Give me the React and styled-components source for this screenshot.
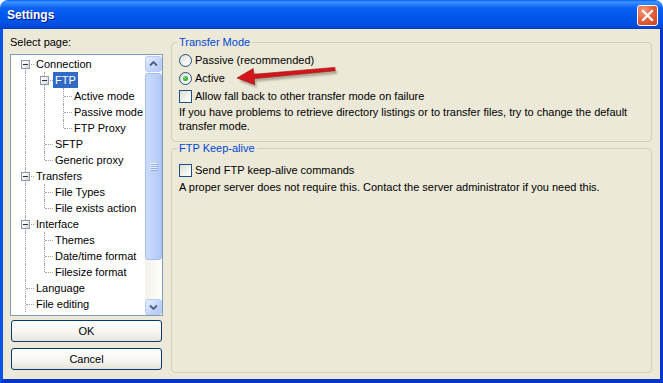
import React from "react";
import styled, { createGlobalStyle } from "styled-components";

const GlobalStyle = createGlobalStyle`
	html, body {
		margin: 0;
		padding: 0;
		background: #FFFFFF;
	}

	body {
		font-family: "Liberation Sans", Arial, sans-serif;
		font-size: 11px;
	}
`;

const Window = styled.div`
	position: relative;
	width: 663px;
	height: 383px;

	display: flex;
	flex-direction: column;

	border-radius: 8px 8px 0 0;
	overflow: hidden;

	font-family: "Liberation Sans", Arial, sans-serif;
	font-size: 11px;
	color: #000000;
`;

const TitleBar = styled.div`
	flex: none;
	height: 29px;
	padding: 0 5px 0 7px;

	display: flex;
	align-items: flex-start;
	justify-content: space-between;

	background: linear-gradient(180deg,
		#0A5FF7 0px, #3D95FF 2px, #2A83FD 4px, #0A60F2 8px,
		#0057EC 16px, #0053E6 23px, #0047D6 27px, #003BC2 29px);
`;

const Title = styled.div`
	margin-top: 8px;

	font-size: 12px;
	font-weight: bold;
	line-height: 14px;
	color: #FFFFFF;
	text-shadow: 1px 1px 0 #0A1883;
`;

const CloseButton = styled.div`
	margin-top: 5px;
	width: 21px;
	height: 21px;
	box-sizing: border-box;

	display: flex;
	align-items: center;
	justify-content: center;

	border: 1px solid #FFFFFF;
	border-radius: 3px;
	background: radial-gradient(circle at 30% 25%, #F39A7E 0%, #E4653F 45%, #CC3F19 100%);
`;

const Body = styled.div`
	flex: 1;
	min-height: 0;
	padding: 7px 8px 6px 7px;

	display: flex;
	gap: 8px;

	background: #ECE9D8;
	border-style: solid;
	border-width: 0 3px 4px 3px;
	border-color: #0B4FE0 #0436C9 #0436C9 #0A55E5;
`;

const LeftColumn = styled.div`
	flex: none;
	width: 153px;

	display: flex;
	flex-direction: column;
`;

const PageLabel = styled.div`
	margin-bottom: 5px;
	line-height: 13px;
`;

const TreeBox = styled.div`
	flex: none;
	height: 262px;
	box-sizing: border-box;
	margin-bottom: 4px;

	display: flex;

	border: 1px solid #7F9DB9;
	background: #FFFFFF;
`;

const TreeList = styled.div`
	flex: 1;
	min-width: 0;
	padding: 1px 0 0 5px;
	overflow: hidden;
`;

const TreeRow = styled.div`
	height: 16px;
	display: flex;
`;

const Guide = styled.span`
	position: relative;
	flex: none;
	width: 19px;

	&::before {
		content: '';
		display: ${(p) => (p.$up || p.$down ? "block" : "none")};
		position: absolute;
		left: 9px;
		top: ${(p) => (p.$up ? "0" : "8px")};
		bottom: ${(p) => (p.$down ? "0" : "8px")};
		border-left: 1px dotted #A0A0A0;
	}

	&::after {
		content: '';
		display: ${(p) => (p.$branch ? "block" : "none")};
		position: absolute;
		left: 10px;
		right: 1px;
		top: 8px;
		border-top: 1px dotted #A0A0A0;
	}
`;

const Expander = styled.span`
	position: absolute;
	left: 5px;
	top: 4px;
	z-index: 1;
	width: 9px;
	height: 9px;
	box-sizing: border-box;

	border: 1px solid #8A9AAE;
	background: linear-gradient(135deg, #FFFFFF 20%, #D6D3C8 100%);

	&::after {
		content: '';
		position: absolute;
		left: 1px;
		top: 3px;
		width: 5px;
		height: 1px;
		background: #1E2E4A;
	}
`;

const NodeLabel = styled.span`
	margin-left: -1px;
	padding: 0 2px;

	line-height: 16px;
	white-space: nowrap;

	background: ${(p) => (p.$selected ? "#316AC5" : "transparent")};
	color: ${(p) => (p.$selected ? "#FFFFFF" : "#000000")};
`;

const Scrollbar = styled.div`
	flex: none;
	width: 17px;
	padding-top: 1px;

	display: flex;
	flex-direction: column;

	background: linear-gradient(90deg, #F3F2EC, #FEFEFB);
`;

const ScrollButton = styled.div`
	flex: none;
	height: 16px;
	box-sizing: border-box;

	display: flex;
	align-items: center;
	justify-content: center;

	border: 1px solid #B9CCF6;
	border-radius: 3px;
	background: linear-gradient(135deg, #E6EEFE 0%, #C6D7FC 55%, #B3C8F8 100%);
`;

const Thumb = styled.div`
	flex: none;
	height: 187px;
	margin-top: 1px;
	box-sizing: border-box;

	display: flex;
	flex-direction: column;
	align-items: center;
	justify-content: center;
	gap: 1px;

	border: 1px solid #A5BCF1;
	border-radius: 3px;
	background: linear-gradient(90deg, #CCDBFE 0%, #BDD0FB 60%, #B2C7F7 100%);
`;

const GripLine = styled.span`
	width: 7px;
	height: 1px;
	background: #EEF4FF;
	box-shadow: 1px 1px 0 #8CA9EE;
`;

const TrackSpace = styled.div`
	flex: 1;
`;

const ButtonStack = styled.div`
	display: flex;
	flex-direction: column;
	gap: 6px;
`;

const PushButton = styled.button`
	height: 22px;
	margin: 0 1px;
	padding: 0;

	border: 1px solid #003C74;
	border-radius: 3px;
	background: linear-gradient(180deg, #FFFFFF 0%, #F7F6F2 55%, #E6E3DA 100%);

	font-family: inherit;
	font-size: 11px;
	color: #000000;
`;

const RightColumn = styled.div`
	flex: 1;
	min-width: 0;

	display: flex;
	flex-direction: column;
`;

const GroupBox = styled.fieldset`
	flex: ${(p) => (p.$grow ? "1" : "none")};
	margin: 0;
	padding: ${(p) => p.$padTop}px 8px 8px 7px;
	min-width: 0;

	display: flex;
	flex-direction: column;

	border: 1px solid #D0D0BF;
	border-radius: 4px;
`;

const GroupLegend = styled.legend`
	margin-left: -2px;
	padding: 0 2px;

	line-height: 13px;
	color: #0046D5;
`;

const OptionRow = styled.label`
	height: 18px;

	display: flex;
	align-items: center;
	gap: 3px;
`;

const Radio = styled.span`
	flex: none;
	width: 13px;
	height: 13px;
	box-sizing: border-box;

	display: flex;
	align-items: center;
	justify-content: center;

	border: 1px solid #1C5180;
	border-radius: 50%;
	background: linear-gradient(135deg, #DCDCD4 0%, #F6F6F2 60%, #FFFFFF 100%);

	&::after {
		content: '';
		display: ${(p) => (p.$checked ? "block" : "none")};
		width: 5px;
		height: 5px;
		border-radius: 50%;
		background: radial-gradient(circle at 35% 35%, #7BE07A 0%, #2CAA2C 60%, #1C8C1C 100%);
	}
`;

const Checkbox = styled.span`
	flex: none;
	width: 13px;
	height: 13px;
	box-sizing: border-box;

	border: 1px solid #1C5180;
	background: linear-gradient(135deg, #DCDCD4 0%, #F4F4F0 60%, #FFFFFF 100%);
`;

const Note = styled.p`
	margin: ${(p) => p.$gap || 0}px 0 0 0;
	line-height: 14px;
`;

const Arrow = styled.svg`
	position: absolute;
	left: 225px;
	top: 55px;
	overflow: visible;
`;

const treeRows = [
	{ label: "Connection", guides: [], up: false, down: true, open: true },
	{ label: "FTP", guides: [1], up: true, down: true, open: true, selected: true },
	{ label: "Active mode", guides: [1, 1], up: true, down: true },
	{ label: "Passive mode", guides: [1, 1], up: true, down: true },
	{ label: "FTP Proxy", guides: [1, 1], up: true, down: false },
	{ label: "SFTP", guides: [1], up: true, down: true },
	{ label: "Generic proxy", guides: [1], up: true, down: false },
	{ label: "Transfers", guides: [], up: true, down: true, open: true },
	{ label: "File Types", guides: [1], up: true, down: true },
	{ label: "File exists action", guides: [1], up: true, down: false },
	{ label: "Interface", guides: [], up: true, down: true, open: true },
	{ label: "Themes", guides: [1], up: true, down: true },
	{ label: "Date/time format", guides: [1], up: true, down: true },
	{ label: "Filesize format", guides: [1], up: true, down: false },
	{ label: "Language", guides: [], up: true, down: true },
	{ label: "File editing", guides: [], up: true, down: true },
];

const Chevron = ({ down }) => (
	<svg width="9" height="6" viewBox="0 0 9 6">
		<path d={ down ? "M1 1.5 L4.5 5 L8 1.5" : "M1 4.5 L4.5 1 L8 4.5" }
			fill="none" stroke="#4D6185" strokeWidth="1.8" />
	</svg>
);

const TreeView = () => (
	<TreeBox>
		<TreeList>
			{ treeRows.map((row) => (
				<TreeRow key={ row.label }>
					{ row.guides.map((g, i) => (
						<Guide key={ i } $up={ g } $down={ g } />
					)) }
					<Guide $up={ row.up } $down={ row.down } $branch>
						{ row.open && <Expander /> }
					</Guide>
					<NodeLabel $selected={ row.selected }>{ row.label }</NodeLabel>
				</TreeRow>
			)) }
		</TreeList>
		<Scrollbar>
			<ScrollButton><Chevron /></ScrollButton>
			<Thumb>
				<GripLine />
				<GripLine />
				<GripLine />
				<GripLine />
			</Thumb>
			<TrackSpace />
			<ScrollButton><Chevron down /></ScrollButton>
		</Scrollbar>
	</TreeBox>
);

export default function App() {
	return (
		<>
			<GlobalStyle />
			<Window>
				<TitleBar>
					<Title>Settings</Title>
					<CloseButton>
						<svg width="13" height="13" viewBox="0 0 13 13">
							<path d="M2 2 L11 11 M11 2 L2 11" stroke="#FFFFFF" strokeWidth="2.2" strokeLinecap="square" />
						</svg>
					</CloseButton>
				</TitleBar>
				<Body>
					<LeftColumn>
						<PageLabel>Select page:</PageLabel>
						<TreeView />
						<ButtonStack>
							<PushButton>OK</PushButton>
							<PushButton>Cancel</PushButton>
						</ButtonStack>
					</LeftColumn>
					<RightColumn>
						<GroupBox $padTop={ 2 }>
							<GroupLegend>Transfer Mode</GroupLegend>
							<OptionRow><Radio />Passive (recommended)</OptionRow>
							<OptionRow><Radio $checked />Active</OptionRow>
							<OptionRow><Checkbox />Allow fall back to other transfer mode on failure</OptionRow>
							<Note>If you have problems to retrieve directory listings or to transfer files, try to change the default transfer mode.</Note>
						</GroupBox>
						<GroupBox $grow $padTop={ 6 }>
							<GroupLegend>FTP Keep-alive</GroupLegend>
							<OptionRow><Checkbox />Send FTP keep-alive commands</OptionRow>
							<Note $gap={ 1 }>A proper server does not require this. Contact the server administrator if you need this.</Note>
						</GroupBox>
					</RightColumn>
				</Body>
				<Arrow width="120" height="40" viewBox="225 55 120 40">
					<defs>
						<filter id="arrowShadow" x="-10%" y="-50%" width="120%" height="200%">
							<feGaussianBlur stdDeviation="1" />
						</filter>
					</defs>
					<path d="M237 78 L254.6 84.5 L254.1 78.6 L335.3 70.8 L334.8 67.4 L253.7 74.3 L253.2 68.5 Z"
						fill="#5A5040" opacity="0.45" transform="translate(2 3)" filter="url(#arrowShadow)" />
					<path d="M237 78 L254.6 84.5 L254.1 78.6 L335.3 70.8 L334.8 67.4 L253.7 74.3 L253.2 68.5 Z"
						fill="#D3161B" stroke="#9E0A0A" strokeWidth="0.6" strokeLinejoin="round" />
				</Arrow>
			</Window>
		</>
	);
}
